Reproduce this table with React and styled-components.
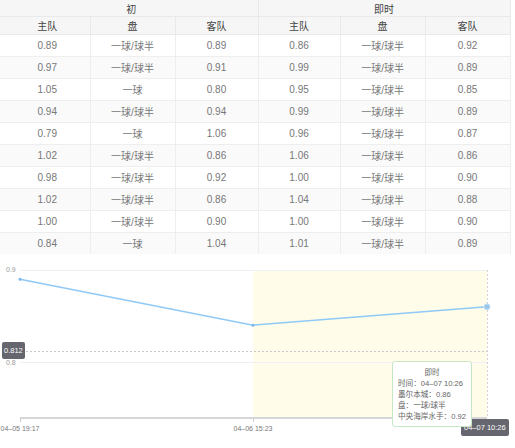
import React from 'react';
import styled, { createGlobalStyle } from 'styled-components';

const GlobalStyle = createGlobalStyle`
    html, body {
        margin      : 0;
        padding     : 0;
        background  : #fff;
        font-family : "Liberation Sans", "Noto Sans CJK SC", sans-serif;
    }
`;

const rows = [
    ['0.89', '一球/球半', '0.89', '0.86', '一球/球半', '0.92'],
    ['0.97', '一球/球半', '0.91', '0.99', '一球/球半', '0.89'],
    ['1.05', '一球',      '0.80', '0.95', '一球/球半', '0.85'],
    ['0.94', '一球/球半', '0.94', '0.99', '一球/球半', '0.89'],
    ['0.79', '一球',      '1.06', '0.96', '一球/球半', '0.87'],
    ['1.02', '一球/球半', '0.86', '1.06', '一球/球半', '0.86'],
    ['0.98', '一球/球半', '0.92', '1.00', '一球/球半', '0.90'],
    ['1.02', '一球/球半', '0.86', '1.04', '一球/球半', '0.88'],
    ['1.00', '一球/球半', '0.90', '1.00', '一球/球半', '0.90'],
    ['0.84', '一球',      '1.04', '1.01', '一球/球半', '0.89'],
];

const colWidths = [90, 85, 83, 82, 85, 85];

const Page = styled.div`
    width    : 515px;
    height   : 448px;
    overflow : hidden;
`;

const Table = styled.table`
    width           : 510px;
    border-collapse : collapse;
    table-layout    : fixed;
    font-size       : 10px;
`;

const HeadCell = styled.th`
    height      : ${p => p.$h}px;
    padding     : 0;
    padding-left: ${p => p.$first ? 5 : 0}px;
    background  : #f6f6f6;
    color       : #444;
    font-weight : normal;
    text-align  : center;
    border      : 1px solid #e9e9e9;
    border-top  : none;
    border-left : ${p => p.$first ? 'none' : '1px solid #e9e9e9'};
`;

const Row = styled.tr`
    background : ${p => p.$odd ? '#fafafa' : '#fff'};
`;

const Cell = styled.td`
    height       : 21px;
    padding      : 0;
    padding-left : ${p => p.$first ? 5 : 0}px;
    color        : #777;
    text-align   : center;
    border       : 1px solid #eeeeee;
    border-left  : ${p => p.$first ? 'none' : '1px solid #eeeeee'};
    border-bottom: none;
`;

const ChartWrap = styled.div`
    position : relative;
    width    : 515px;
    height   : 193px;
`;

const MarkLabel = styled.div`
    position     : absolute;
    left         : ${p => p.$left}px;
    top          : ${p => p.$top}px;
    height       : 17px;
    padding      : 0 ${p => p.$pad}px;
    background   : #66666e;
    border-radius: 2px;
    color        : #fff;
    font-size    : 7.5px;
    line-height  : 17px;
    white-space  : nowrap;
`;

const Tooltip = styled.div`
    position     : absolute;
    left         : 392px;
    top          : 107px;
    width        : 80px;
    padding      : 5px 0 4px 5px;
    box-sizing   : border-box;
    background   : #fff;
    border       : 1px solid #c6e7c6;
    border-radius: 3px;
    color        : #666;
    font-size    : 7.6px;
    line-height  : 11px;
    white-space  : nowrap;
`;

const TipTitle = styled.div`
    text-align    : center;
    padding-right : 5px;
`;

// chart geometry
const yOf = v => 108 - (v - 0.8) * 920;
const points = [
    { x: 20,  v: 0.89 },
    { x: 253, v: 0.84 },
    { x: 487, v: 0.86 },
];

function Chart() {
    const line = points.map(p => `${p.x},${yOf(p.v)}`).join(' ');
    return (
        <ChartWrap>
            <svg width="515" height="193" style={{ display: 'block' }}>
                <rect x="253" y="16" width="234" height="148" fill="#fffdea" />
                <line x1="20" y1="16.5" x2="487" y2="16.5" stroke="#eef0f6" />
                <line x1="20" y1="108.5" x2="487" y2="108.5" stroke="#eef0f6" />
                <line x1="22" y1="97.5" x2="487" y2="97.5" stroke="#c8c8c8" strokeDasharray="2 2" />
                <line x1="487.5" y1="16" x2="487.5" y2="164" stroke="#d2d2d2" strokeDasharray="2 2" />
                <line x1="20" y1="164" x2="487" y2="164" stroke="#d6d6d9" strokeWidth="2" />
                <line x1="20.5" y1="165" x2="20.5" y2="168" stroke="#ccc" />
                <line x1="253.5" y1="165" x2="253.5" y2="168" stroke="#ccc" />
                <text x="6" y="18" fontSize="7" fill="#999">0.9</text>
                <text x="6" y="111" fontSize="7" fill="#999">0.8</text>
                <text x="20" y="177" fontSize="7" fill="#777" textAnchor="middle">04–05 19:17</text>
                <text x="253" y="177" fontSize="7" fill="#777" textAnchor="middle">04–06 15:23</text>
                <polyline points={line} fill="none" stroke="#8fc9f7" strokeWidth="1.5" />
                <circle cx="20" cy={yOf(0.89)} r="1.5" fill="#7ab8ee" />
                <circle cx="253" cy={yOf(0.84)} r="1.5" fill="#7ab8ee" />
                <circle cx="487" cy={yOf(0.86)} r="3" fill="#9cc8ec" stroke="#c8e0f5" />
            </svg>
            <MarkLabel $left={2} $top={88} $pad={2}>0.812</MarkLabel>
            <MarkLabel $left={461} $top={165} $pad={3}>04–07 10:26</MarkLabel>
            <Tooltip>
                <TipTitle>即时</TipTitle>
                <div>时间：04–07 10:26</div>
                <div>墨尔本城：0.86</div>
                <div>盘：一球/球半</div>
                <div>中央海岸水手：0.92</div>
            </Tooltip>
        </ChartWrap>
    );
}

export default function App() {
    return (
        <Page>
            <GlobalStyle />
            <Table>
                <colgroup>
                    {colWidths.map((w, i) => <col key={i} style={{ width: w }} />)}
                </colgroup>
                <thead>
                    <tr>
                        <HeadCell colSpan={3} $h={16} $first>初</HeadCell>
                        <HeadCell colSpan={3} $h={16}>即时</HeadCell>
                    </tr>
                    <tr>
                        {['主队', '盘', '客队', '主队', '盘', '客队'].map((t, i) => (
                            <HeadCell key={i} $h={17} $first={i === 0}>{t}</HeadCell>
                        ))}
                    </tr>
                </thead>
                <tbody>
                    {rows.map((r, ri) => (
                        <Row key={ri} $odd={ri % 2 === 1}>
                            {r.map((c, ci) => (
                                <Cell key={ci} $first={ci === 0}>{c}</Cell>
                            ))}
                        </Row>
                    ))}
                </tbody>
            </Table>
            <Chart />
        </Page>
    );
}
